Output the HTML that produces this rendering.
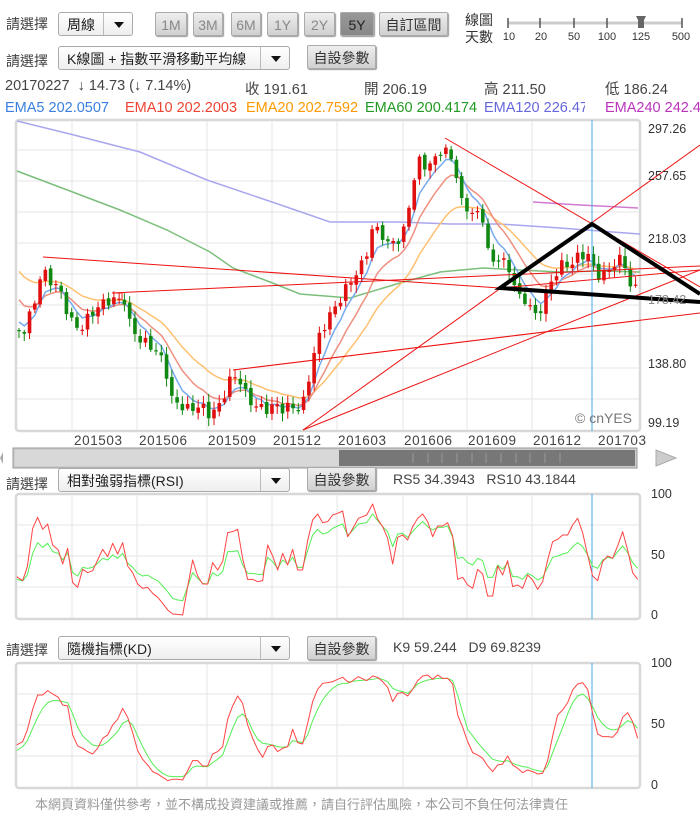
<!DOCTYPE html>
<html><head><meta charset="utf-8">
<style>
body{margin:0;width:700px;height:803px;overflow:hidden;background:#fff;font-family:"Liberation Sans","Noto Sans CJK TC",sans-serif;color:#333;position:relative}
.a{position:absolute;white-space:nowrap}
.t{font-size:14.5px;color:#444}
.lbl{font-size:14px;color:#444}
.sel{position:absolute;height:24px;border:1px solid #aaa;border-radius:3px;background:linear-gradient(#fff,#eee);font-size:14px;line-height:24px;padding-left:8px;box-sizing:border-box;color:#222}
.sel .ar{position:absolute;right:0;top:0;width:28px;height:22px;border-left:1px solid #bbb}
.sel .ar:after{content:"";position:absolute;left:10px;top:9px;border-left:5px solid transparent;border-right:5px solid transparent;border-top:6px solid #111}
.btn{position:absolute;height:24px;border:1px solid #aaa;border-radius:2px;background:linear-gradient(#eee,#d0d0d0);font-size:14px;line-height:24px;text-align:center;color:#888;box-sizing:border-box;box-shadow:1px 1px 1px #999}
.btn.d{color:#333}
.btn.on{background:linear-gradient(#999,#888);color:#222}
</style></head><body>
<div class="a lbl" style="left:6px;top:14px">請選擇</div>
<div class="sel" style="left:58px;top:12px;width:75px">周線<span class="ar"></span></div>
<div class="btn" style="left:155px;top:12px;width:32px">1M</div>
<div class="btn" style="left:193px;top:12px;width:30px">3M</div>
<div class="btn" style="left:231px;top:12px;width:30px">6M</div>
<div class="btn" style="left:267px;top:12px;width:31px">1Y</div>
<div class="btn" style="left:304px;top:12px;width:31px">2Y</div>
<div class="btn on" style="left:340px;top:12px;width:34px">5Y</div>
<div class="btn d" style="left:379px;top:12px;width:69px">自訂區間</div>
<div class="a lbl" style="left:465px;top:12px;line-height:17px;color:#333">線圖<br>天數</div>
<svg class="a" style="left:500px;top:10px" width="200" height="34">
<line x1="8" y1="13" x2="182" y2="13" stroke="#ccc" stroke-width="3"/>
<g stroke="#555" stroke-width="1.5"><line x1="8" y1="8" x2="8" y2="18"/><line x1="40" y1="8" x2="40" y2="18"/><line x1="74" y1="8" x2="74" y2="18"/><line x1="107" y1="8" x2="107" y2="18"/><line x1="182" y1="8" x2="182" y2="18"/></g>
<path d="M136 6h10l-2 4v8h-6v-8z" fill="#666"/>
<g font-size="11" fill="#333" text-anchor="middle"><text x="9" y="30">10</text><text x="41" y="30">20</text><text x="74" y="30">50</text><text x="107" y="30">100</text><text x="141" y="30">125</text><text x="181" y="30">500</text></g>
</svg>
<div class="a lbl" style="left:6px;top:51px">請選擇</div>
<div class="sel" style="left:58px;top:46px;width:232px">K線圖 + 指數平滑移動平均線<span class="ar"></span></div>
<div class="btn d" style="left:307px;top:45px;width:69px">自設參數</div>
<div class="a t" style="left:5px;top:78px">20170227 &nbsp;↓ 14.73 (↓ 7.14%)</div>
<div class="a t" style="left:245px;top:78px">收 191.61</div>
<div class="a t" style="left:364px;top:78px">開 206.19</div>
<div class="a t" style="left:484px;top:78px">高 211.50</div>
<div class="a t" style="left:605px;top:78px">低 186.24</div>
<div class="a t" style="left:5px;top:100px;color:#3a7fdf">EMA5 202.0507</div>
<div class="a t" style="left:125px;top:100px;color:#ee4433">EMA10 202.2003</div>
<div class="a t" style="left:246px;top:100px;color:#ff9900">EMA20 202.7592</div>
<div class="a t" style="left:365px;top:100px;color:#229922">EMA60 200.4174</div>
<div class="a t" style="left:484px;top:100px;color:#6666dd;width:101px;overflow:hidden">EMA120 226.471</div>
<div class="a t" style="left:605px;top:100px;color:#bb33bb">EMA240 242.4</div>

<svg class="a" style="left:0;top:0" width="700" height="803" id="sv">
<defs><clipPath id="cm"><rect x="16" y="120" width="684" height="311"/></clipPath></defs>
<g fill="#fff" stroke="#d8d8d8" stroke-width="2.5"><rect x="16" y="120" width="624" height="311" rx="3"/><rect x="16" y="494" width="624" height="125" rx="3"/><rect x="16" y="663" width="624" height="125" rx="3"/></g>
<g stroke="#e6e6e6" stroke-width="1">
<path d="M17 150H639M17 181H639M17 212H639M17 243H639M17 274H639M17 305H639M17 336H639M17 368H639M17 399H639"/>
<path d="M72 121V430M137 121V430M207 121V430M272 121V430M337 121V430M403 121V430M467 121V430M532 121V430"/>
<path d="M17 525H639M17 556H639M17 587H639M72 495V618M137 495V618M207 495V618M272 495V618M337 495V618M403 495V618M467 495V618M532 495V618"/>
<path d="M17 694H639M17 725H639M17 756H639M72 664V787M137 664V787M207 664V787M272 664V787M337 664V787M403 664V787M467 664V787M532 664V787"/>
</g>
<g id="main" clip-path="url(#cm)" fill="none">
<polyline stroke="#a9a6ee" stroke-width="1.5" points="17,121 70,134 140,152 207,180 272,202 330,222 400,222 450,224 500,224 560,228 640,234"/>
<polyline stroke="#d07ad0" stroke-width="1.5" points="533,202 580,205 638,208"/>
<polyline stroke="#7cbf7c" stroke-width="1.5" points="17,171 70,191 120,210 167,230 210,252 233,268 270,282 300,294 350,298 400,283 440,272 483,268 520,270 560,272 600,271 640,272"/>
</g>
<g id="cand" clip-path="url(#cm)"></g>
<g clip-path="url(#cm)" fill="none" stroke="#ee1111" stroke-width="1">
<path d="M43,257 L500,288"/><path d="M112,293 L700,266"/><path d="M112,293H122V300"/><path d="M233,370 L700,313"/><path d="M303,430 L700,145"/><path d="M303,430 L700,270"/><path d="M445,138 L700,287"/><path d="M500,288 L700,270"/>
</g>
<line x1="592" y1="120" x2="592" y2="431" stroke="#44aaee" stroke-width="1"/>
<line x1="592" y1="494" x2="592" y2="619" stroke="#44aaee" stroke-width="1"/>
<line x1="592" y1="663" x2="592" y2="788" stroke="#44aaee" stroke-width="1"/>
<g fill="none" stroke="#000" stroke-width="4" stroke-linejoin="miter"><path d="M700,302 L500,288 L592,224 L700,294"/></g>
<text x="575" y="423" font-size="14" fill="#777">© cnYES</text>
<g font-size="12.5" fill="#333"><text x="648" y="133">297.26</text><text x="648" y="180">257.65</text><text x="648" y="243">218.03</text><text x="648" y="304" fill="#888">178.42</text><text x="648" y="368">138.80</text><text x="648" y="427">99.19</text>
<text x="651" y="498">100</text><text x="651" y="559">50</text><text x="651" y="619">0</text>
<text x="651" y="667">100</text><text x="651" y="728">50</text><text x="651" y="789">0</text></g>
<g font-size="13.5" fill="#444" text-anchor="middle"><text x="98" y="445" textLength="48">201503</text><text x="163" y="445" textLength="48">201506</text><text x="232" y="445" textLength="48">201509</text><text x="297" y="445" textLength="48">201512</text><text x="362" y="445" textLength="48">201603</text><text x="428" y="445" textLength="48">201606</text><text x="492" y="445" textLength="48">201609</text><text x="557" y="445" textLength="48">201612</text><text x="622" y="445" textLength="48">201703</text></g>
<rect x="13" y="448" width="624" height="20" fill="#ccc" stroke="#999"/>
<rect x="15" y="450" width="324" height="16" fill="#d8d8d8"/>
<rect x="339" y="450" width="296" height="16" fill="#777"/>
<g stroke="#999" stroke-width="1"><path d="M413 453v10M428 453v10M442 453v10M457 453v10M472 453v10M486 453v10M501 453v10M516 453v10M530 453v10M545 453v10M560 453v10"/></g>
<path d="M3 452 L0 458 L3 464z" fill="#aaa"/>
<path d="M656 450 L676 458 L656 466z" fill="#ccc" stroke="#aaa"/>
<g fill="none" stroke-width="3" stroke-linejoin="round">
<g transform="translate(0,480) scale(0.3333)">
<polyline stroke="#55ee55" points="50,298 68,303 82,285 98,220 113,188 128,202 143,190 158,215 175,220 188,240 203,218 218,278 233,288 248,262 263,265 278,262 293,250 308,235 323,240 338,225 353,235 368,220 383,250 398,262 413,280 428,288 443,285 458,295 473,302 488,318 503,335 518,355 533,360 548,362 563,320 578,278 593,295 608,310 623,312 638,278 653,288 668,275 683,215 698,215 713,212 728,255 743,280 758,280 773,283 788,283 803,232 818,245 833,265 848,240 863,252 878,232 893,262 908,262 923,212 938,165 953,148 968,162 983,158 998,145 1013,138 1028,132 1043,165 1050,160"/>
<polyline stroke="#ff4444" points="50,290 68,302 82,260 98,145 113,112 128,148 143,132 158,195 175,210 188,252 203,205 218,308 233,322 248,268 263,278 278,272 293,240 308,208 323,230 338,190 353,222 368,188 383,258 398,278 413,312 428,325 443,322 458,340 473,352 488,370 503,390 518,402 533,403 548,405 563,320 578,240 593,288 608,312 623,312 638,248 653,270 668,245 683,158 698,155 713,148 728,235 743,298 758,298 773,305 788,302 803,195 818,228 833,270 848,220 863,255 878,208 893,270 908,270 923,182 938,120 953,102 968,128 983,125 998,105 1013,100 1028,93 1043,170 1050,160"/>
<polyline stroke="#55ee55" points="50,812 68,800 82,782 98,745 113,712 128,685 143,668 158,662 175,662 188,665 203,668 218,702 233,742 248,768 263,782 278,795 293,798 308,795 323,785 338,770 353,755 368,730 383,722 398,735 413,768 428,800 443,828 458,852 473,868 488,880 503,888 518,890 533,890 548,890 563,880 578,862 593,858 608,860 623,860 638,848 653,838 668,825 683,785 698,745 713,712 728,702 743,718 758,752 773,778 788,790 803,792 818,795 833,800 848,802 863,800 878,782 893,785 908,788 923,765 938,722 953,688 968,660 983,640 998,625 1013,615 1028,610 1043,610 1050,605"/>
<polyline stroke="#ff4444" points="50,795 68,785 82,750 98,688 113,645 128,645 143,632 158,642 175,652 188,675 203,678 218,765 233,798 248,805 263,815 278,822 293,805 308,775 323,765 338,735 353,718 368,685 383,712 398,758 413,812 428,838 443,855 458,875 473,882 488,892 503,902 518,898 533,898 548,900 563,872 578,842 593,842 608,858 623,858 638,822 653,815 668,800 683,718 698,678 713,648 728,670 743,735 758,775 773,808 788,832 803,800 818,795 833,815 848,805 863,800 878,748 893,788 908,792 923,730 938,665 953,628 968,610 983,608 998,605 1013,598 1028,592 1043,605 1050,608"/>
</g>
<g transform="translate(350,480) scale(0.3333)">
<polyline stroke="#55ee55" points="0,160 25,132 50,128 68,102 83,122 98,140 113,155 128,200 143,162 158,160 173,172 188,155 203,138 218,125 233,140 248,150 263,142 278,142 293,138 308,172 323,235 338,232 353,248 368,255 383,235 398,242 413,292 428,292 443,255 458,268 473,248 488,290 503,290 518,298 533,280 548,288 563,300 578,292 593,262 608,232 623,228 638,222 653,218 668,200 683,188 698,200 713,225 728,258 743,265 758,240 773,232 788,235 803,215 818,198 833,218 848,248 863,265"/>
<polyline stroke="#ff4444" points="0,160 25,115 50,105 68,72 83,118 98,140 113,175 128,252 143,172 158,165 173,180 188,140 203,115 218,102 233,125 248,170 263,138 278,138 293,128 308,168 323,298 338,292 353,315 368,325 383,268 398,282 413,348 428,348 443,258 458,285 473,242 488,320 503,315 518,325 533,285 548,300 563,328 578,305 593,240 608,185 623,178 638,165 653,165 668,135 683,115 698,158 713,225 728,288 743,302 758,245 773,228 788,235 803,198 818,155 833,210 848,278 863,298"/>
<polyline stroke="#55ee55" points="0,605 25,602 50,600 68,598 83,595 98,598 113,605 128,625 143,632 158,635 173,640 188,628 203,612 218,605 233,600 248,598 263,595 278,595 293,595 308,602 323,645 338,698 353,748 368,768 383,788 398,805 413,822 428,838 443,842 458,845 473,842 488,850 503,855 518,860 533,862 548,868 563,872 578,875 593,858 608,818 623,780 638,742 653,702 668,668 683,648 698,642 713,655 728,680 743,712 758,732 773,745 788,750 803,748 818,735 833,722 848,728 863,745"/>
<polyline stroke="#ff4444" points="0,608 25,590 50,602 68,588 83,592 98,605 113,622 128,665 143,640 158,638 173,648 188,628 203,602 218,588 233,585 248,598 263,585 278,595 293,595 308,612 323,705 338,742 353,785 368,818 383,825 398,835 413,858 428,875 443,855 458,852 473,828 488,855 503,865 518,878 533,870 548,875 563,882 578,880 593,842 608,768 623,705 638,690 653,668 668,630 683,612 698,608 713,628 728,700 743,762 758,770 773,770 788,772 803,755 818,712 833,698 848,725 863,775"/>
</g></g>
</svg>

<div class="a lbl" style="left:6px;top:474px">請選擇</div>
<div class="sel" style="left:58px;top:468px;width:232px">相對強弱指標(RSI)<span class="ar"></span></div>
<div class="btn d" style="left:307px;top:467px;width:69px">自設參數</div>
<div class="a" style="left:393px;top:471px;font-size:14px;color:#444">RS5 34.3943 &nbsp;&nbsp;RS10 43.1844</div>
<div class="a lbl" style="left:6px;top:640px">請選擇</div>
<div class="sel" style="left:58px;top:636px;width:232px">隨機指標(KD)<span class="ar"></span></div>
<div class="btn d" style="left:307px;top:636px;width:69px">自設參數</div>
<div class="a" style="left:393px;top:639px;font-size:14px;color:#444">K9 59.244 &nbsp;&nbsp;D9 69.8239</div>
<div class="a" style="left:35px;top:794px;font-size:13px;color:#999">本網頁資料僅供參考，並不構成投資建議或推薦，請自行評估風險，本公司不負任何法律責任</div>

<script>
(function(){
var K=[[17,330],[25,330],[35,300],[42,270],[50,280],[60,290],[70,320],[80,330],[90,315],[100,305],[110,300],[125,300],[130,325],[140,340],[150,345],[160,355],[167,375],[172,400],[180,405],[190,410],[200,405],[210,415],[220,405],[232,375],[240,380],[248,400],[255,405],[265,410],[275,405],[285,410],[290,405],[297,410],[305,400],[312,360],[318,340],[322,330],[330,315],[337,305],[345,290],[355,275],[365,260],[372,230],[380,230],[388,245],[395,240],[402,240],[410,200],[418,160],[425,165],[432,165],[440,150],[447,152],[452,160],[458,180],[462,205],[470,210],[475,215],[480,215],[485,220],[490,270],[495,260],[500,255],[505,265],[512,275],[520,300],[525,300],[530,305],[537,320],[540,310],[550,285],[560,265],[570,265],[580,255],[590,255],[595,275],[602,275],[610,270],[618,258],[625,265],[630,285],[637,290]];
function ip(x){for(var i=1;i<K.length;i++){if(x<=K[i][0]){var a=K[i-1],b=K[i];return a[1]+(b[1]-a[1])*(x-a[0])/(b[0]-a[0]);}}return K[K.length-1][1];}
var s="",N=118,prev=330,e5=318,e10=293,e20=265,p5=[],p10=[],p20=[];
for(var i=0;i<N;i++){var x=19+i*5.27;var c=ip(x)+Math.sin(i*2.3)*5;var o=prev+Math.sin(i*1.7)*2;
var bt=Math.min(o,c),bb=Math.max(o,c);var hh=bt-2-Math.abs(Math.sin(i*3.1))*6,ll=bb+2+Math.abs(Math.cos(i*2.7))*6;
var col=c<o?"#e01010":"#118811";
s+='<line x1="'+x+'" y1="'+hh+'" x2="'+x+'" y2="'+ll+'" stroke="'+col+'" stroke-width="1"/>';
s+='<rect x="'+(x-1.8)+'" y="'+bt+'" width="3.6" height="'+Math.max(bb-bt,1.2)+'" fill="'+col+'"/>';
prev=c;e5+=(c-e5)*2/6;e10+=(c-e10)*2/11;e20+=(c-e20)*2/21;p5.push(x+","+e5);p10.push(x+","+e10);p20.push(x+","+e20);}
var m=document.getElementById("main");
m.insertAdjacentHTML("beforeend",'<polyline fill="none" stroke="#ffc070" stroke-width="1.5" points="'+p20.join(" ")+'"/><polyline fill="none" stroke="#ee9080" stroke-width="1.5" points="'+p10.join(" ")+'"/><polyline fill="none" stroke="#77aaee" stroke-width="1.5" points="'+p5.join(" ")+'"/>');
document.getElementById("cand").innerHTML=s;
})();
</script>
</body></html>
